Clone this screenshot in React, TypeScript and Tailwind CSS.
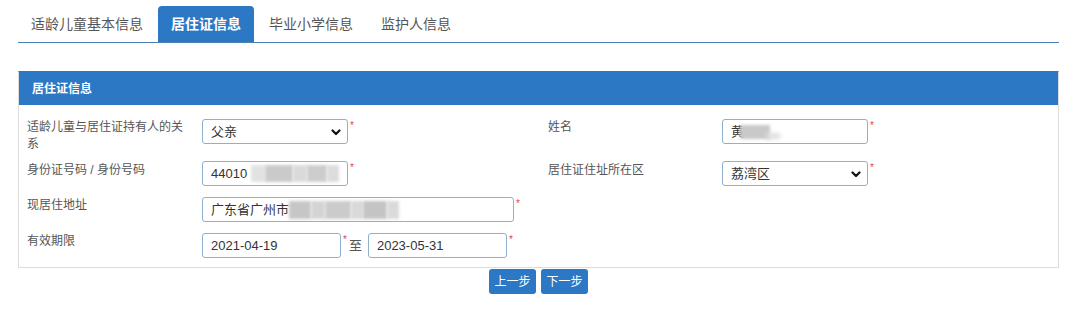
import React from "react";

const FONT = { fontFamily: '"Liberation Sans", "Noto Sans CJK SC", sans-serif' };

function Star() {
  return <span className="ml-[2px] mt-[2px] self-start text-[10px] leading-[10px] text-[#e0455a]">*</span>;
}

function Chevron() {
  return (
    <svg width="10" height="7" viewBox="0 0 10 7" className="absolute right-[6px] top-[9px]">
      <polyline points="1.5,1.5 5,5 8.5,1.5" fill="none" stroke="#111" strokeWidth="2.2" strokeLinecap="round" strokeLinejoin="round" />
    </svg>
  );
}

function Box({ w, children, select }: { w: string; children?: React.ReactNode; select?: boolean }) {
  return (
    <div className={`relative flex h-[25px] items-center overflow-hidden rounded-[3px] border border-[#8fb0cf] bg-white pl-[8px] text-[13px] text-[#333] ${w}`}>
      {children}
      {select && <Chevron />}
    </div>
  );
}

function Blur({ w, h = "h-[15px]" }: { w: string; h?: string }) {
  return <span className={`inline-block ${w} ${h} bg-[#c9c9c9] blur-[1.5px]`} />;
}

export default function App() {
  return (
    <div className="min-h-[317px] w-[1080px] bg-white pt-[6px]" style={FONT}>
      {/* Tabs */}
      <div className="ml-[18px] flex h-[37px] w-[1041px] items-end border-b border-[#4a7eb3]">
        <div className="mr-[2px] flex h-[36px] items-center px-[13px] text-[14px] leading-[20px] text-[#555]">适龄儿童基本信息</div>
        <div className="mr-[2px] flex h-[36px] items-center rounded-t-[4px] bg-[#2c78c4] px-[13px] text-[14px] font-bold leading-[20px] text-white">居住证信息</div>
        <div className="mr-[2px] flex h-[36px] items-center px-[13px] text-[14px] leading-[20px] text-[#555]">毕业小学信息</div>
        <div className="mr-[2px] flex h-[36px] items-center px-[13px] text-[14px] leading-[20px] text-[#555]">监护人信息</div>
      </div>

      {/* Panel */}
      <div className="ml-[18px] mt-[28px] w-[1041px] border border-[#dcdcdc] border-t-[#2c78c4]">
        <div className="flex h-[33px] items-center bg-[#2c78c4] pl-[13px] text-[12px] font-bold text-white">居住证信息</div>
        <div className="pb-[4px] pl-[8px] pt-[8px] text-[12px] leading-[17px] text-[#555]">
          {/* Row 1 */}
          <div className="flex pb-[2px] pt-[6px]">
            <div className="w-[175px] pr-[12px]">适龄儿童与居住证持有人的关系</div>
            <div className="flex w-[346px]">
              <Box w="w-[146px]" select>父亲</Box>
              <Star />
            </div>
            <div className="w-[174px]">姓名</div>
            <div className="flex">
              <Box w="w-[146px]">
                <span>黄</span>
                <span className="-ml-[4px] flex flex-col">
                  <Blur w="w-[30px]" h="h-[14px]" />
                </span>
                <span className="ml-[-4px] mt-[8px] inline-block h-[6px] w-[14px] bg-[#dedede] blur-[2px]" />
              </Box>
              <Star />
            </div>
          </div>
          {/* Row 2 */}
          <div className="flex pb-[5px] pt-[6px]">
            <div className="w-[175px] pt-[1px]">身份证号码 / 身份号码</div>
            <div className="flex w-[346px]">
              <Box w="w-[146px]">
                <span>44010</span>
                <span className="ml-[4px] flex h-[17px] items-center">
                  <span className="inline-block h-[17px] w-[14px] bg-[#e2e2e2] blur-[1.5px]" />
                  <span className="inline-block h-[17px] w-[28px] bg-[#cacaca] blur-[1.5px]" />
                  <span className="inline-block h-[17px] w-[14px] bg-[#dadada] blur-[1.5px]" />
                  <span className="inline-block h-[17px] w-[20px] bg-[#cdcdcd] blur-[1.5px]" />
                  <span className="inline-block h-[17px] w-[12px] bg-[#dcdcdc] blur-[1.5px]" />
                </span>
              </Box>
              <Star />
            </div>
            <div className="w-[174px] pt-[1px]">居住证住址所在区</div>
            <div className="flex">
              <Box w="w-[146px]" select>荔湾区</Box>
              <Star />
            </div>
          </div>
          {/* Row 3 */}
          <div className="flex pb-[5px] pt-[6px]">
            <div className="w-[175px]">现居住地址</div>
            <div className="flex">
              <Box w="w-[312px]">
                <span>广东省广州市</span>
                <span className="flex h-[18px] items-center">
                  <span className="inline-block h-[18px] w-[22px] bg-[#c6c6c6] blur-[1.5px]" />
                  <span className="inline-block h-[18px] w-[14px] bg-[#d4d4d4] blur-[1.5px]" />
                  <span className="inline-block h-[18px] w-[26px] bg-[#cbcbcb] blur-[1.5px]" />
                  <span className="inline-block h-[18px] w-[12px] bg-[#d9d9d9] blur-[1.5px]" />
                  <span className="inline-block h-[18px] w-[24px] bg-[#c4c4c4] blur-[1.5px]" />
                  <span className="inline-block h-[18px] w-[12px] bg-[#dadada] blur-[1.5px]" />
                </span>
              </Box>
              <Star />
            </div>
          </div>
          {/* Row 4 */}
          <div className="flex pb-[5px] pt-[6px]">
            <div className="w-[175px]">有效期限</div>
            <div className="flex items-center">
              <Box w="w-[139px]">2021-04-19</Box>
              <Star />
              <span className="ml-[2px] mr-[6px] text-[13px] text-[#555]">至</span>
              <Box w="w-[139px]">2023-05-31</Box>
              <Star />
            </div>
          </div>
        </div>
      </div>

      {/* Buttons */}
      <div className="ml-[18px] mt-[1px] flex w-[1041px] justify-center gap-[5px]">
        <button className="flex h-[25px] w-[47px] items-center justify-center rounded-[3px] bg-[#2c78c4] text-[12px] text-white">上一步</button>
        <button className="flex h-[25px] w-[47px] items-center justify-center rounded-[3px] bg-[#2c78c4] text-[12px] text-white">下一步</button>
      </div>
    </div>
  );
}
